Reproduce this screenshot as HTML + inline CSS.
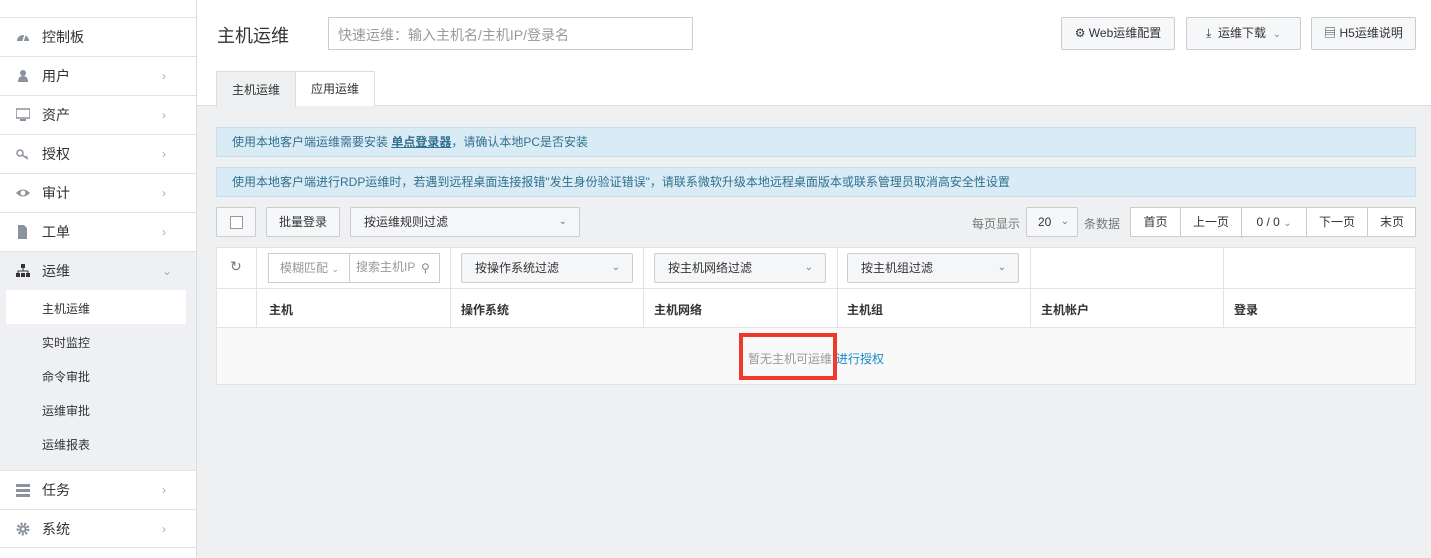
<!DOCTYPE html><html><head><meta charset="utf-8"><style>
*{box-sizing:border-box;margin:0;padding:0}
body{width:1431px;height:558px;overflow:hidden;font-family:"Liberation Sans","Noto Sans CJK SC",sans-serif;background:#eef0f2;position:relative;color:#333}
.a{position:absolute}
.side{left:0;top:0;width:197px;height:558px;background:#fff;border-right:1px solid #ddd}
.mi{position:absolute;left:0;width:196px;height:39px;border-top:1px solid #e3e3e3;font-size:14px;line-height:38px;padding-left:42px;color:#333}
.mi .ic{position:absolute;left:16px;top:12px;width:14px;height:14px}
.mi .ar{position:absolute;left:162px;top:0;color:#aaa;font-size:12px}
.sub{position:absolute;left:42px;font-size:12px;color:#333}
.btn{position:absolute;border:1px solid #ccc;background:#f6f7f9;border-radius:2px;font-size:12px;color:#333;text-align:center}
.sel{position:absolute;border:1px solid #ccc;background:#f5f6f8;border-radius:2px;font-size:12px;color:#333;padding-left:13px}
.chev{position:absolute;right:12px;top:0;color:#777;font-size:10px}
.th{position:absolute;font-size:12px;font-weight:bold;color:#333;top:301px}
.vl{position:absolute;width:1px;background:#e3e3e3}
</style></head><body>
<div class="a side">
<div class="mi" style="top:17px"><svg class="ic" viewBox="0 0 14 14"><path d="M1 11A6 6 0 0 1 13 11Z" fill="#8a929c"/><path d="M7 11L9 5" stroke="#fff" stroke-width="1.5"/></svg>控制板</div>
<div class="mi" style="top:56px"><svg class="ic" viewBox="0 0 14 14"><circle cx="7" cy="4" r="3" fill="#8a929c"/><path d="M2 13Q2 7 7 7Q12 7 12 13Z" fill="#8a929c"/></svg>用户<span class="ar">›</span></div>
<div class="mi" style="top:95px"><svg class="ic" viewBox="0 0 14 14"><rect x="0" y="1" width="14" height="9" fill="none" stroke="#8a929c" stroke-width="1.5"/><rect x="4" y="11" width="6" height="2" fill="#8a929c"/></svg>资产<span class="ar">›</span></div>
<div class="mi" style="top:134px"><svg class="ic" viewBox="0 0 14 14"><circle cx="4" cy="6" r="3" fill="none" stroke="#8a929c" stroke-width="1.5"/><path d="M6 8L12 12M10 11L11 9" stroke="#8a929c" stroke-width="1.5"/></svg>授权<span class="ar">›</span></div>
<div class="mi" style="top:173px"><svg class="ic" viewBox="0 0 14 14"><path d="M0 7Q7 0 14 7Q7 14 0 7Z" fill="#8a929c"/><circle cx="7" cy="7" r="2.5" fill="#fff"/></svg>审计<span class="ar">›</span></div>
<div class="mi" style="top:212px"><svg class="ic" viewBox="0 0 14 14"><path d="M2 0H8L11 3V14H2Z" fill="#8a929c"/></svg>工单<span class="ar">›</span></div>
<div class="mi" style="top:251px;background:#eef0f3"><svg class="ic" viewBox="0 0 14 14"><rect x="5" y="0" width="4" height="4" fill="#333"/><path d="M7 4V7M2 9V7H12V9" stroke="#333" fill="none"/><rect x="0" y="9" width="4" height="4" fill="#333"/><rect x="5" y="9" width="4" height="4" fill="#333"/><rect x="10" y="9" width="4" height="4" fill="#333"/></svg>运维<span class="ar">⌄</span></div>
<div class="a" style="left:0;top:290px;width:196px;height:180px;background:#eef0f3"></div>
<div class="a" style="left:6px;top:290px;width:180px;height:34px;background:#fff"></div>
<div class="sub" style="top:300px">主机运维</div>
<div class="sub" style="top:334px">实时监控</div>
<div class="sub" style="top:368px">命令审批</div>
<div class="sub" style="top:402px">运维审批</div>
<div class="sub" style="top:436px">运维报表</div>
<div class="mi" style="top:470px"><svg class="ic" viewBox="0 0 14 14"><rect x="0" y="1" width="14" height="3" fill="#8a929c"/><rect x="0" y="6" width="14" height="3" fill="#8a929c"/><rect x="0" y="11" width="14" height="3" fill="#8a929c"/></svg>任务<span class="ar">›</span></div>
<div class="mi" style="top:509px;border-bottom:1px solid #e3e3e3"><svg class="ic" viewBox="0 0 14 14"><circle cx="7" cy="7" r="5" fill="none" stroke="#8a929c" stroke-width="3" stroke-dasharray="2 1.5"/><circle cx="7" cy="7" r="3.5" fill="#8a929c"/><circle cx="7" cy="7" r="1.5" fill="#fff"/></svg>系统<span class="ar">›</span></div>
</div>
<div class="a" style="left:197px;top:0;width:1234px;height:106px;background:#fff;border-bottom:1px solid #ddd"></div>
<div class="a" style="left:217px;top:22px;font-size:18px;color:#333">主机运维</div>
<div class="a" style="left:328px;top:17px;width:365px;height:33px;border:1px solid #ccc;font-size:14px;color:#999;padding:7px 9px">快速运维：输入主机名/主机IP/登录名</div>
<div class="btn" style="left:1061px;top:17px;width:114px;height:33px;line-height:31px">⚙ Web运维配置</div>
<div class="btn" style="left:1186px;top:17px;width:115px;height:33px;line-height:31px">⤓&nbsp; 运维下载 &nbsp;<span style="color:#888;font-size:10px">⌄</span></div>
<div class="btn" style="left:1311px;top:17px;width:105px;height:33px;line-height:31px">▤ H5运维说明</div>
<div class="a" style="left:216px;top:71px;width:80px;height:36px;background:#eef0f2;border:1px solid #ddd;border-bottom:none;font-size:12px;text-align:center;line-height:36px">主机运维</div>
<div class="a" style="left:295px;top:71px;width:80px;height:35px;background:#fff;border:1px solid #ddd;border-bottom:none;font-size:12px;text-align:center;line-height:35px">应用运维</div>
<div class="a" style="left:216px;top:127px;width:1200px;height:30px;background:#d9ebf5;border:1px solid #c2e0ee;font-size:12px;color:#31708f;line-height:28px;padding-left:15px">使用本地客户端运维需要安装 <b style="text-decoration:underline">单点登录器</b>，请确认本地PC是否安装</div>
<div class="a" style="left:216px;top:167px;width:1200px;height:30px;background:#d9ebf5;border:1px solid #c2e0ee;font-size:12px;color:#31708f;line-height:28px;padding-left:15px">使用本地客户端进行RDP运维时，若遇到远程桌面连接报错"发生身份验证错误"，请联系微软升级本地远程桌面版本或联系管理员取消高安全性设置</div>
<div class="btn" style="left:216px;top:207px;width:40px;height:30px"><div style="margin:8px auto;width:13px;height:13px;border:1px solid #999;background:#fff"></div></div>
<div class="btn" style="left:266px;top:207px;width:74px;height:30px;line-height:28px">批量登录</div>
<div class="sel" style="left:350px;top:207px;width:230px;height:30px;line-height:28px">按运维规则过滤<span class="chev">⌄</span></div>
<div class="a" style="left:972px;top:215px;font-size:12px;color:#777">每页显示</div>
<div class="sel" style="left:1026px;top:207px;width:52px;height:30px;line-height:28px;background:#f6f7f9;padding-left:11px">20<span class="chev" style="right:8px">⌄</span></div>
<div class="a" style="left:1084px;top:215px;font-size:12px;color:#777">条数据</div>
<div class="a" style="left:1130px;top:207px;width:286px;height:30px;background:#fff;border:1px solid #ccc;font-size:12px;line-height:28px">
<span class="a" style="left:0;width:49px;text-align:center">首页</span><span class="a" style="left:49px;width:61px;text-align:center;border-left:1px solid #ccc">上一页</span><span class="a" style="left:110px;width:65px;text-align:center;border-left:1px solid #ccc">0 / 0 <span style="font-size:10px;color:#888">⌄</span></span><span class="a" style="left:175px;width:61px;text-align:center;border-left:1px solid #ccc">下一页</span><span class="a" style="left:236px;width:49px;text-align:center;border-left:1px solid #ccc">末页</span></div>
<div class="a" style="left:216px;top:247px;width:1200px;height:138px;background:#fff;border:1px solid #e3e3e3"></div>
<div class="a" style="left:217px;top:327px;width:1198px;height:57px;background:#f9f9f9"></div>
<div class="a" style="left:217px;top:288px;width:1198px;height:1px;background:#e3e3e3"></div>
<div class="a" style="left:217px;top:327px;width:1198px;height:1px;background:#e3e3e3"></div>
<div class="vl" style="left:256px;top:247px;height:80px"></div><div class="vl" style="left:450px;top:247px;height:80px"></div><div class="vl" style="left:643px;top:247px;height:80px"></div><div class="vl" style="left:837px;top:247px;height:80px"></div><div class="vl" style="left:1030px;top:247px;height:80px"></div><div class="vl" style="left:1223px;top:247px;height:80px"></div>
<div class="a" style="left:230px;top:258px;font-size:14px;color:#777">↻</div>
<div class="a" style="left:268px;top:253px;width:172px;height:30px;border:1px solid #ccc;background:#fff;font-size:12px;color:#999;line-height:28px"><span class="a" style="left:11px">模糊匹配 <span style="font-size:9px">⌄</span></span><span class="a" style="left:80px;top:-1px;height:30px;border-left:1px solid #ccc;padding-left:6px">搜索主机IP</span><span class="a" style="left:152px;color:#888">⚲</span></div>
<div class="sel" style="left:461px;top:253px;width:172px;height:30px;line-height:28px">按操作系统过滤<span class="chev">⌄</span></div>
<div class="sel" style="left:654px;top:253px;width:172px;height:30px;line-height:28px">按主机网络过滤<span class="chev">⌄</span></div>
<div class="sel" style="left:847px;top:253px;width:172px;height:30px;line-height:28px">按主机组过滤<span class="chev">⌄</span></div>
<div class="th" style="left:269px">主机</div><div class="th" style="left:461px">操作系统</div><div class="th" style="left:654px">主机网络</div><div class="th" style="left:847px">主机组</div><div class="th" style="left:1041px">主机帐户</div><div class="th" style="left:1234px">登录</div>
<div class="a" style="left:748px;top:350px;font-size:12px;color:#999">暂无主机可运维</div>
<div class="a" style="left:836px;top:350px;font-size:12px;color:#1a88c9">进行授权</div>
<div class="a" style="left:739px;top:333px;width:98px;height:47px;border:4px solid #f0392b"></div>
</body></html>
